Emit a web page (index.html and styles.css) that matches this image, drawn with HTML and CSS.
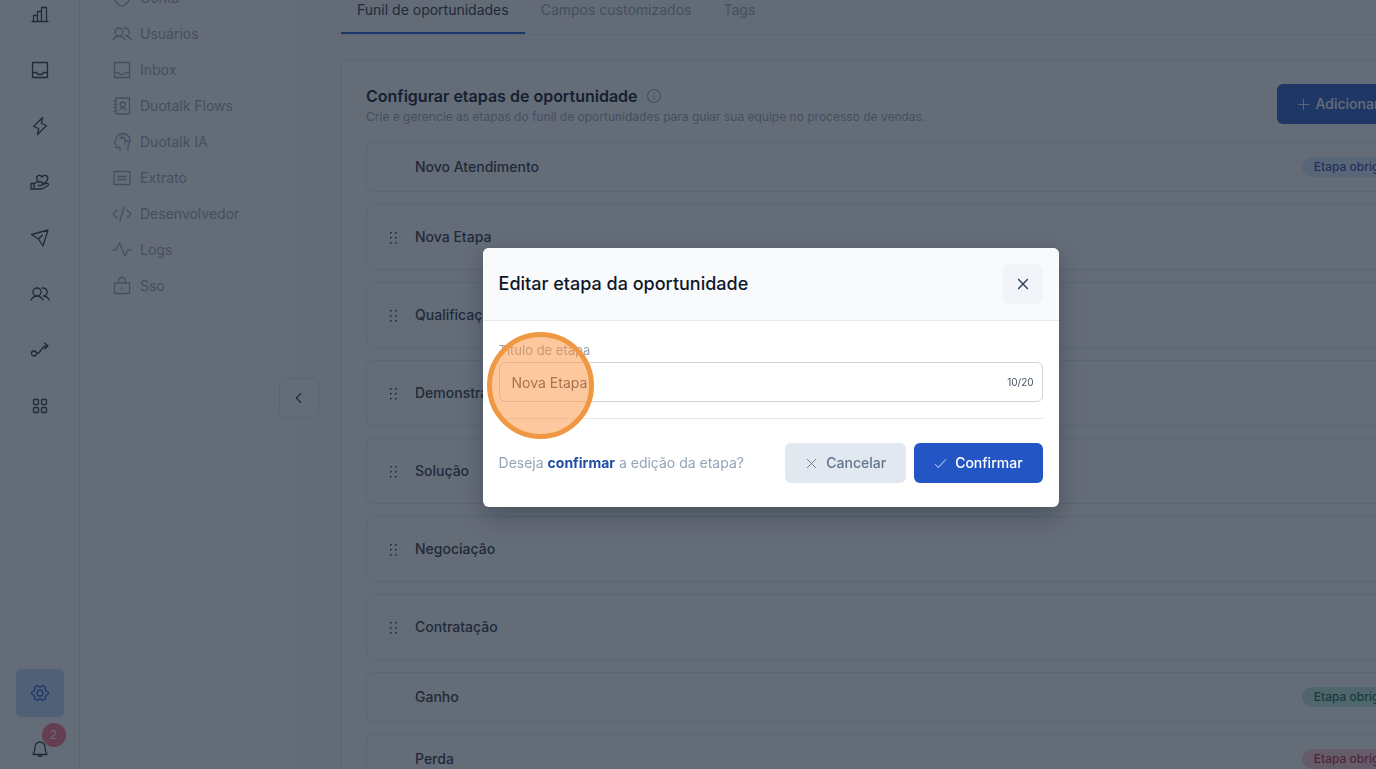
FILE: index.html
```html
<!DOCTYPE html>
<html lang="pt-BR">
<head>
    <meta charset="UTF-8">
    <meta name="viewport" content="width=device-width, initial-scale=1.0">
    <title>Funil de oportunidades - Duotalk</title>
    <link rel="stylesheet" href="styles.css">
</head>
<body>
    <div class="app">
        <nav class="rail" aria-label="Principal">
            <div class="rail-group">
                <a class="rail-link" href="#" aria-label="Relatórios">
                    <svg class="icon" viewBox="0 0 20 20"><path d="M2 17.5h16M3.5 17.5v-6h4M7.500 17.500v-10h4M11.500 17.500v-14h5v14"/></svg>
                </a>
                <a class="rail-link" href="#" aria-label="Inbox">
                    <svg class="icon" viewBox="0 0 20 20"><path d="M2.500 2.500h15v15h-15zM2.500 12.500h4l2 2h3l2-2h4"/></svg>
                </a>
                <a class="rail-link" href="#" aria-label="Automações">
                    <svg class="icon" viewBox="0 0 20 20"><path d="M12.500 1.500l-1.200 6 5.200 2-9 9 1.200-6-5.200-2z"/></svg>
                </a>
                <a class="rail-link" href="#" aria-label="Oportunidades">
                    <svg class="icon" viewBox="0 0 20 20"><path d="M1 11.500h3v5.500h-3zM4 12l2.500-2h4.500a1.500 1.500 0 0 1 0 3.500h-2.500M11.500 13.200l5.500-2a1.300 1.300 0 0 1 1 2.300l-6 3.500h-8M9 10c-1.800-1.500-2.300-2.600-2.300-3.800a2.700 2.700 0 0 1 5.300-.9 3 3 0 0 1 5.800.9c0 1.800-1.600 3.500-4 5.300"/></svg>
                </a>
                <a class="rail-link" href="#" aria-label="Campanhas">
                    <svg class="icon" viewBox="0 0 20 20"><path d="M1.500 6.500l16.500-4.500-5 16-4.500-7zM8.500 11l4-4"/></svg>
                </a>
                <a class="rail-link" href="#" aria-label="Contatos">
                    <svg class="icon" viewBox="0 0 20 20"><circle cx="7" cy="8" r="4"/><path d="M1 16c1.500-2.600 3.500-4 6-4s4.500 1.400 6 4M12 4.200a4 4 0 1 1 1.500 7.800c2.500 0 4.300 1.400 5.800 4"/></svg>
                </a>
                <a class="rail-link" href="#" aria-label="Fluxos">
                    <svg class="icon" viewBox="0 0 20 20"><circle cx="4" cy="13.500" r="2.500"/><path d="M6.500 13.500c5.500 0 3.500-7.500 10.500-7.500M14.500 3l3.500 3-3.500 3"/></svg>
                </a>
                <a class="rail-link" href="#" aria-label="Aplicativos">
                    <svg class="icon" viewBox="0 0 20 20"><rect x="3.500" y="3.500" width="5" height="5" rx="1"/><rect x="11.500" y="3.500" width="5" height="5" rx="1"/><rect x="3.500" y="11.500" width="5" height="5" rx="1"/><rect x="11.500" y="11.500" width="5" height="5" rx="1"/></svg>
                </a>
            </div>
            <div class="rail-group">
                <a class="rail-link active" href="#" aria-label="Configurações">
                    <svg class="icon" viewBox="0 0 20 20"><circle cx="10" cy="10" r="3"/><path d="M7.200 2.500l1.300 1.400h3l1.300-1.400 2.700 1.500-.3 2.200 1.200 2 1.900.8v2l-1.900.8-1.200 2 .3 2.200-2.700 1.500-1.300-1.400h-3l-1.300 1.400-2.700-1.500.3-2.200-1.200-2-1.900-.8v-2l1.900-.8 1.200-2-.3-2.200z"/></svg>
                </a>
                <a class="rail-link" href="#" aria-label="Notificações">
                    <svg class="icon" viewBox="0 0 20 20"><path d="M3 15.500h14l-1.500-3.500-.5-4a5 5 0 0 0-10 0l-.5 4zM8 16c.3 2.200 3.700 2.200 4 0"/></svg>
                    <span class="count">2</span>
                </a>
            </div>
        </nav>

        <aside class="submenu">
            <a class="submenu-link" href="#">
                <svg class="icon" viewBox="0 0 20 20"><path d="M10 1.500l7 2.500v7c0 3-3 5.500-7 7.500-4-2-7-4.500-7-7.500v-7z"/></svg>
                Conta
            </a>
            <a class="submenu-link" href="#">
                <svg class="icon" viewBox="0 0 20 20"><circle cx="7" cy="8" r="4"/><path d="M1 16c1.500-2.600 3.500-4 6-4s4.500 1.400 6 4M12 4.200a4 4 0 1 1 1.500 7.800c2.500 0 4.300 1.400 5.800 4"/></svg>
                Usuários
            </a>
            <a class="submenu-link" href="#">
                <svg class="icon" viewBox="0 0 20 20"><path d="M2.500 2.500h15v15h-15zM2.500 12.500h4l2 2h3l2-2h4"/></svg>
                Inbox
            </a>
            <a class="submenu-link" href="#">
                <svg class="icon" viewBox="0 0 20 20"><path d="M4 2h13.500v16h-13.500zM2 5h2M2 8.300h2M2 11.600h2M2 15h2M7.500 14c1.500-3 5-3 6.500 0"/><circle cx="10.800" cy="8.500" r="2.500"/></svg>
                Duotalk Flows
            </a>
            <a class="submenu-link" href="#">
                <svg class="icon" viewBox="0 0 20 20"><path d="M8 18.500v-3h-4v-3.500l-2-1 2-3c0-4 3-6.500 7-6.500 4 0 7 3 7 6.500 0 3-2 4-2 6v4.500M10 2v4h3v3h4M13 9v3M10 6h-2"/></svg>
                Duotalk IA
            </a>
            <a class="submenu-link" href="#">
                <svg class="icon" viewBox="0 0 20 20"><path d="M2 3.500h16v13h-16zM6 8.500h8M6 11.500h8"/></svg>
                Extrato
            </a>
            <a class="submenu-link" href="#">
                <svg class="icon" viewBox="0 0 20 20"><path d="M5 6l-4 4 4 4M15 6l4 4-4 4M12 3l-4 14"/></svg>
                Desenvolvedor
            </a>
            <a class="submenu-link" href="#">
                <svg class="icon" viewBox="0 0 20 20"><path d="M1 10h3l3.500-7 5.500 13 3-6h3"/></svg>
                Logs
            </a>
            <a class="submenu-link" href="#">
                <svg class="icon" viewBox="0 0 20 20"><path d="M2.500 7h15v10.500h-15zM6.500 7v-2a3.500 3.500 0 0 1 7 0v2M10 11.500v1.500"/></svg>
                Sso
            </a>
            <button class="collapse-btn" type="button" aria-label="Recolher menu">
                <svg class="icon" viewBox="0 0 20 20"><path d="M12 5l-5 5 5 5"/></svg>
            </button>
        </aside>

        <main class="main">
            <div class="tabs">
                <a class="tab active" href="#">Funil de oportunidades</a>
                <a class="tab" href="#">Campos customizados</a>
                <a class="tab" href="#">Tags</a>
            </div>

            <section class="card">
                <header class="card-header">
                    <div>
                        <h1 class="card-title">
                            Configurar etapas de oportunidade
                            <svg class="icon info" viewBox="0 0 20 20"><circle cx="10" cy="10" r="8"/><path d="M10 9v5M10 6v1"/></svg>
                        </h1>
                        <p class="card-text">Crie e gerencie as etapas do funil de oportunidades para guiar sua equipe no processo de vendas.</p>
                    </div>
                    <button class="btn btn-add" type="button">
                        <svg class="icon" viewBox="0 0 20 20"><path d="M10 2v16M2 10h16"/></svg>
                        Adicionar nova etapa
                    </button>
                </header>

                <ul class="stages">
                    <li class="stage fixed">Novo Atendimento <span class="badge blue">Etapa obrigatória</span></li>
                    <li class="stage"><span class="grip"></span>Nova Etapa</li>
                    <li class="stage"><span class="grip"></span>Qualificação</li>
                    <li class="stage"><span class="grip"></span>Demonstração</li>
                    <li class="stage"><span class="grip"></span>Solução</li>
                    <li class="stage"><span class="grip"></span>Negociação</li>
                    <li class="stage"><span class="grip"></span>Contratação</li>
                    <li class="stage fixed">Ganho <span class="badge green">Etapa obrigatória</span></li>
                    <li class="stage fixed">Perda <span class="badge red">Etapa obrigatória</span></li>
                </ul>
            </section>
        </main>
    </div>

    <div class="overlay">
        <form class="modal" role="dialog" aria-labelledby="modalTitle">
            <header class="modal-header">
                <h2 class="modal-title" id="modalTitle">Editar etapa da oportunidade</h2>
                <button class="close-btn" type="button" aria-label="Fechar">
                    <svg class="icon" viewBox="0 0 20 20"><path d="M4.500 4.500l11 11M15.500 4.500l-11 11"/></svg>
                </button>
            </header>
            <div class="modal-body">
                <label class="field-label" for="stageTitle">Título de etapa</label>
                <div class="field">
                    <input type="text" id="stageTitle" name="stageTitle" value="Nova Etapa" maxlength="20">
                    <span class="counter">10/20</span>
                </div>
                <div class="modal-footer">
                    <p class="question">Deseja <strong>confirmar</strong> a edição da etapa?</p>
                    <button class="btn btn-cancel" type="button">
                        <svg class="icon" viewBox="0 0 20 20"><path d="M3.500 3.500l13 13M16.500 3.500l-13 13"/></svg>
                        Cancelar
                    </button>
                    <button class="btn btn-confirm" type="submit">
                        <svg class="icon" viewBox="0 0 20 20"><path d="M2 11.500l4.500 4.500 11.500-12"/></svg>
                        Confirmar
                    </button>
                </div>
            </div>
            <span class="click-marker"></span>
        </form>
    </div>
</body>
</html>
```
FILE: styles.css
```css
* {
    margin: 0;
    padding: 0;
    box-sizing: border-box;
    font-family: Inter, 'Liberation Sans', sans-serif;
}

body {
    height: 100vh;
    overflow: hidden;
    font-size: 14px;
    line-height: 20px;
    color: #1e293b;
    background: #f8fafc;
}

a {
    color: inherit;
    text-decoration: none;
}

button {
    border: none;
    cursor: pointer;
    font-size: 14px;
    line-height: 20px;
}

.icon {
    width: 20px;
    height: 20px;
    flex-shrink: 0;
    fill: none;
    stroke: currentColor;
    stroke-width: 1.3;
    stroke-linejoin: round;
    stroke-linecap: round;
}

/* The app is wider than the window and slightly scrolled */
.app {
    display: flex;
    width: 112vw;
    height: calc(100vh + 24px);
    margin-top: -20px;
}

/* Icon rail */
.rail {
    width: 80px;
    flex-shrink: 0;
    display: flex;
    flex-direction: column;
    justify-content: space-between;
    align-items: center;
    padding-top: 10px;
    background: #fff;
    border-right: 1px solid #e2e8f0;
}

.rail-group {
    display: flex;
    flex-direction: column;
    gap: 8px;
}

.rail-link {
    position: relative;
    width: 48px;
    height: 48px;
    display: flex;
    align-items: center;
    justify-content: center;
    border-radius: 6px;
}

.rail-link.active {
    background: #bfdbfe;
    color: #1d4ed8;
}

.count {
    position: absolute;
    top: -2px;
    right: -2px;
    width: 24px;
    height: 24px;
    border-radius: 50%;
    background: #ff6b85;
    color: #fff;
    font-size: 12px;
    line-height: 24px;
    text-align: center;
}

/* Settings menu */
.submenu {
    position: relative;
    width: 220px;
    flex-shrink: 0;
    padding: 0 32px;
    background: #fff;
    border-right: 1px solid #f1f5f9;
}

.submenu-link {
    height: 36px;
    display: flex;
    align-items: center;
    gap: 8px;
    color: #94a3b8;
}

.collapse-btn {
    position: absolute;
    top: 398px;
    right: -20px;
    width: 40px;
    height: 40px;
    display: flex;
    align-items: center;
    justify-content: center;
    background: #fff;
    border: 1px solid #e2e8f0;
    border-radius: 6px;
    color: #1e293b;
}

.collapse-btn .icon {
    width: 18px;
    height: 18px;
}

/* Content */
.main {
    flex: 1;
    min-width: 0;
    padding: 0 41px;
}

.tabs {
    display: flex;
    height: 55px;
    border-bottom: 1px solid #e2e8f0;
    color: #94a3b8;
}

.tab {
    padding: 20px 16px 0;
}

.tab.active {
    color: #1e293b;
    border-bottom: 2px solid #1d4ed8;
}

.card {
    margin-top: 24px;
    padding: 24px;
    background: #fff;
    border: 1px solid #e2e8f0;
    border-radius: 8px;
}

.card-header {
    display: flex;
    justify-content: space-between;
    align-items: flex-start;
    margin-bottom: 16px;
}

.card-title {
    display: flex;
    align-items: center;
    gap: 8px;
    font-size: 16px;
    font-weight: 600;
    line-height: 24px;
    color: #020617;
}

.icon.info {
    width: 16px;
    height: 16px;
    color: #94a3b8;
}

.card-text {
    font-size: 12px;
    line-height: 18px;
    color: #94a3b8;
}

.btn {
    height: 40px;
    display: flex;
    align-items: center;
    gap: 8px;
    padding: 0 20px;
    border-radius: 6px;
    font-weight: 500;
}

.btn .icon {
    width: 13px;
    height: 13px;
}

.btn-add,
.btn-confirm {
    background: #2355c5;
    color: #fff;
}

.btn-add {
    gap: 6px;
    padding-right: 18px;
}

.stages {
    display: flex;
    flex-direction: column;
    gap: 12px;
    list-style: none;
}

.stage {
    height: 66px;
    display: flex;
    align-items: center;
    padding: 0 50px 0 21px;
    border: 1px solid #e2e8f0;
    border-radius: 8px;
    font-weight: 500;
}

.stage.fixed {
    height: 50px;
    justify-content: space-between;
    padding-left: 48px;
}

.grip {
    width: 10px;
    height: 15px;
    margin-right: 17px;
    background: radial-gradient(circle, #475569 1px, transparent 1px) 0 0 / 5px 5px;
}

.badge {
    padding: 0 12px;
    border-radius: 10px;
    font-size: 12px;
}

.badge.blue {
    background: #dbeafe;
    color: #1e40af;
}

.badge.green {
    background: #b9ebdb;
    color: #065f46;
}

.badge.red {
    background: #fecdd3;
    color: #be123c;
}

/* Modal */
.overlay {
    position: fixed;
    top: 0;
    left: 0;
    width: 112vw;
    height: 100vh;
    display: flex;
    align-items: center;
    justify-content: center;
    padding-bottom: 14px;
    background: rgba(30, 42, 58, 0.69);
}

.modal {
    position: relative;
    width: 576px;
    background: #fff;
    border-radius: 6px;
    box-shadow: 0 10px 24px rgba(15, 23, 42, 0.3);
}

.modal-header {
    display: flex;
    align-items: center;
    justify-content: space-between;
    padding: 16px;
    background: #f8fafc;
    border-bottom: 1px solid #e2e8f0;
    border-radius: 6px 6px 0 0;
}

.modal-title {
    font-size: 18px;
    font-weight: 500;
    line-height: 28px;
    color: #0f172a;
}

.close-btn {
    width: 40px;
    height: 40px;
    display: flex;
    align-items: center;
    justify-content: center;
    background: #f1f5f9;
    border-radius: 6px;
    color: #334155;
}

.close-btn .icon {
    width: 16px;
    height: 16px;
    stroke-width: 1.8;
}

.modal-body {
    padding: 19px 16px 24px;
}

.field-label {
    display: block;
    margin-bottom: 2px;
    font-size: 13px;
    color: #9ca3af;
}

.field {
    display: flex;
    align-items: center;
    height: 40px;
    padding: 0 8px 0 12px;
    border: 1px solid #d1d5db;
    border-radius: 6px;
}

.field input {
    flex: 1;
    min-width: 0;
    height: 20px;
    border: none;
    outline: none;
    background: none;
    font-size: 14px;
    color: #4b5563;
}

.counter {
    font-size: 10px;
    color: #4b5563;
}

.modal-footer {
    display: flex;
    align-items: center;
    gap: 8px;
    margin-top: 16px;
    padding-top: 24px;
    border-top: 1px solid #e5e7eb;
}

.question {
    flex: 1;
    color: #94a3b8;
}

.question strong {
    font-weight: 700;
    color: #1e4fa3;
}

.btn-cancel {
    background: #e2e8f0;
    color: #64748b;
}

/* Click highlight over the field */
.click-marker {
    position: absolute;
    top: 84px;
    left: 4px;
    width: 107px;
    height: 107px;
    border: 5px solid #ef9743;
    border-radius: 50%;
    background: rgba(251, 146, 60, 0.5);
    pointer-events: none;
}
```
